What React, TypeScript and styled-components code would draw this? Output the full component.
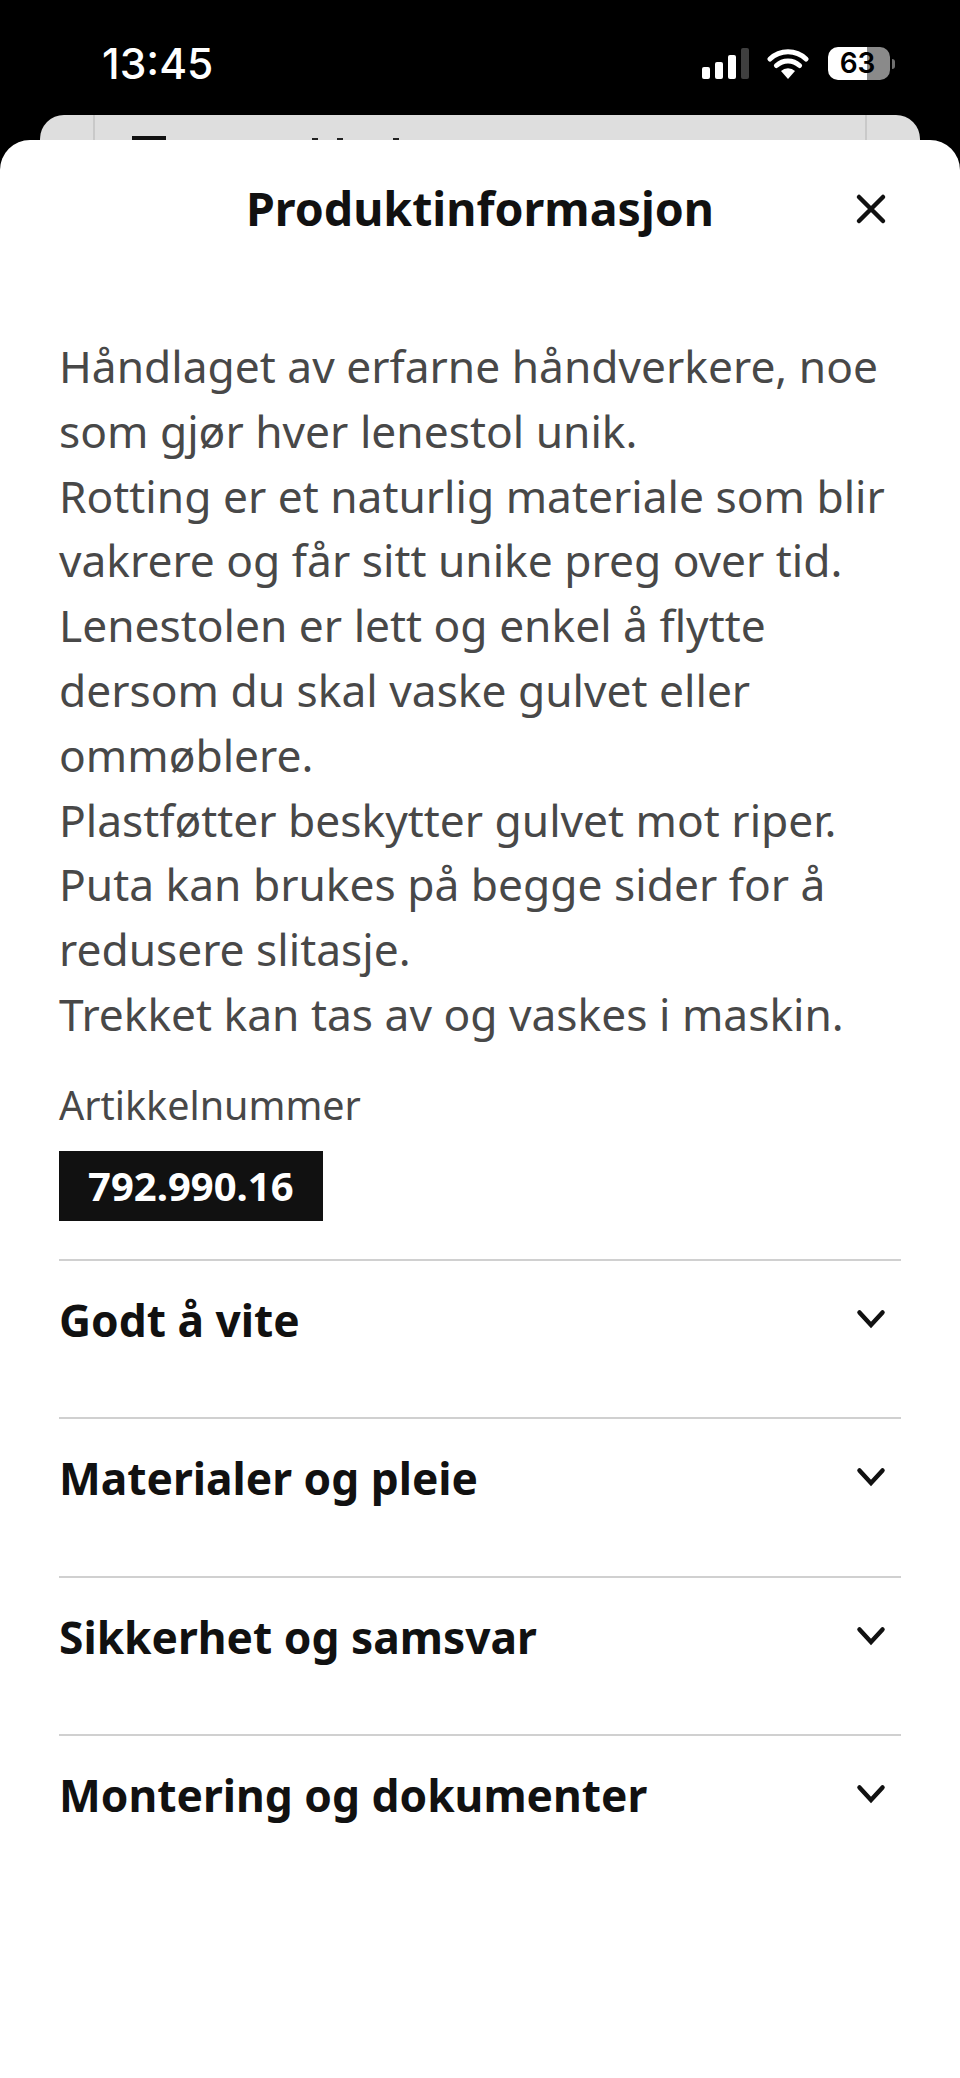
import { createGlobalStyle, styled } from "styled-components";

const sections = [
  "Godt å vite",
  "Materialer og pleie",
  "Sikkerhet og samsvar",
  "Montering og dokumenter",
];

const bars = [12, 17, 24, 31];

const GlobalStyle = createGlobalStyle`
  html, body {
    margin: 0;
    padding: 0;
    background: #000;
  }
  body {
    font-family: "Noto Sans", sans-serif;
  }
`;

const Page = styled.div`
  width: 960px;
  height: 2078px;
  display: flex;
  flex-direction: column;
  background: #000;
  overflow: hidden;
`;

const StatusBar = styled.div`
  height: 115px;
  box-sizing: border-box;
  padding: 47px 65px 0 102px;
  display: flex;
  justify-content: space-between;
  align-items: flex-start;
`;

const Clock = styled.div`
  font-family: Inter, "Liberation Sans", sans-serif;
  font-size: 42.5px;
  line-height: 33px;
  color: #fff;
  font-weight: 500;
`;

const StatusIcons = styled.div`
  display: flex;
  align-items: center;
  height: 33px;
`;

const Signal = styled.div`
  display: flex;
  align-items: flex-end;
  gap: 5px;
  height: 31px;
  margin-right: 18px;
`;

const SignalBar = styled.span<{ $off?: boolean }>`
  width: 8px;
  border-radius: 2px;
  background: ${(p) => (p.$off ? "#3f3f3f" : "#fff")};
`;

const Battery = styled.div`
  width: 59px;
  height: 33px;
  padding-right: 3px;
  margin-left: 19px;
  border-radius: 10px;
  background: linear-gradient(90deg, #fff 0 39px, #8a8a8a 39px);
  color: #000;
  font-family: Inter, "Liberation Sans", sans-serif;
  font-size: 28px;
  font-weight: 600;
  line-height: 33px;
  text-align: center;
`;

const BatteryNub = styled.span`
  width: 3px;
  height: 10px;
  margin-left: 2px;
  border-radius: 0 3px 3px 0;
  background: #6e6e6e;
`;

const BehindCard = styled.div`
  height: 25px;
  margin: 0 40px;
  padding: 0 53px;
  border-radius: 24px 24px 0 0;
  background: #dedede;
  overflow: hidden;
`;

const BehindInner = styled.div`
  height: 100%;
  padding-left: 37px;
  border-left: 2px solid #c9c9c9;
  border-right: 2px solid #c9c9c9;
  display: flex;
  align-items: flex-end;
`;

const BehindBar = styled.span`
  width: 34px;
  height: 4px;
  background: #111;
`;

const BehindTick = styled.span<{ $gap: number }>`
  width: 6px;
  height: 2px;
  margin-left: ${(p) => p.$gap}px;
  background: #222;
`;

const Sheet = styled.div`
  flex: 1;
  background: #fff;
  border-radius: 30px 30px 0 0;
  padding: 0 59px;
`;

const SheetHeader = styled.div`
  height: 140px;
  display: flex;
  align-items: center;
  justify-content: center;
  position: relative;
`;

const SheetTitle = styled.h1`
  margin: -4px 0 0;
  font-size: 46.5px;
  font-weight: 700;
  color: #111;
`;

const CloseButton = styled.button`
  position: absolute;
  right: 12px;
  top: 51px;
  width: 36px;
  height: 36px;
  padding: 0;
  border: 0;
  background: none;
  color: #111;
  display: flex;
`;

const Description = styled.p`
  margin: 54px 0 0;
  font-size: 44.3px;
  line-height: 64.8px;
  color: #484848;
`;

const ArticleLabel = styled.div`
  margin-top: 32px;
  font-size: 39.5px;
  line-height: 52px;
  color: #484848;
`;

const ArticleNumber = styled.div`
  display: inline-block;
  margin-top: 20px;
  padding: 0 29px;
  height: 70px;
  line-height: 70px;
  background: #111;
  color: #fff;
  font-size: 40px;
  font-weight: 700;
`;

const Accordion = styled.div`
  margin-top: 38px;
`;

const AccordionRow = styled.div`
  box-sizing: border-box;
  height: 158.5px;
  border-top: 2px solid #d0d0d0;
  display: flex;
  justify-content: space-between;
  align-items: flex-start;
  padding: 29px 12px 0 0;
`;

const RowTitle = styled.span`
  font-size: 44.3px;
  line-height: 60px;
  font-weight: 700;
  color: #111;
`;

const Chevron = styled.svg`
  width: 36px;
  height: 36px;
  margin-top: 11px;
  color: #111;
`;

const Signals = () => (
  <Signal>
    {bars.map((h, i) => (
      <SignalBar key={i} $off={i === 3} style={{ height: h }} />
    ))}
  </Signal>
);

const Wifi = () => (
  <svg width="42" height="31" viewBox="0 0 42 31">
    <path
      d="M3 11a26 26 0 0 1 36 0M9.5 17.5a17 17 0 0 1 23 0"
      fill="none"
      stroke="#fff"
      strokeWidth="5"
      strokeLinecap="round"
    />
    <path d="M21 31l-7-8a10 10 0 0 1 14 0z" fill="#fff" />
  </svg>
);

const App = () => {
  return (
    <Page>
      <GlobalStyle />
      <StatusBar>
        <Clock>13:45</Clock>
        <StatusIcons>
          <Signals />
          <Wifi />
          <Battery>63</Battery>
          <BatteryNub />
        </StatusIcons>
      </StatusBar>
      <BehindCard>
        <BehindInner>
          <BehindBar />
          <BehindTick $gap={146} />
          <BehindTick $gap={19} />
          <BehindTick $gap={50} />
        </BehindInner>
      </BehindCard>
      <Sheet>
        <SheetHeader>
          <SheetTitle>Produktinformasjon</SheetTitle>
          <CloseButton aria-label="Lukk">
            <svg width="36" height="36" viewBox="0 0 36 36">
              <path
                d="M6 6l24 24M30 6L6 30"
                stroke="currentColor"
                strokeWidth="4.5"
                strokeLinecap="round"
                fill="none"
              />
            </svg>
          </CloseButton>
        </SheetHeader>
        <Description>
          Håndlaget av erfarne håndverkere, noe som gjør hver lenestol unik.
          <br />
          Rotting er et naturlig materiale som blir vakrere og får sitt unike preg over tid.
          <br />
          Lenestolen er lett og enkel å flytte dersom du skal vaske gulvet eller ommøblere.
          <br />
          Plastføtter beskytter gulvet mot riper.
          <br />
          Puta kan brukes på begge sider for å redusere slitasje.
          <br />
          Trekket kan tas av og vaskes i maskin.
        </Description>
        <ArticleLabel>Artikkelnummer</ArticleLabel>
        <ArticleNumber>792.990.16</ArticleNumber>
        <Accordion>
          {sections.map((title) => (
            <AccordionRow key={title}>
              <RowTitle>{title}</RowTitle>
              <Chevron viewBox="0 0 36 36">
                <path
                  d="M6.5 11.5L18 24l11.5-12.5"
                  fill="none"
                  stroke="currentColor"
                  strokeWidth="4.5"
                  strokeLinecap="round"
                />
              </Chevron>
            </AccordionRow>
          ))}
        </Accordion>
      </Sheet>
    </Page>
  );
};

export default App;
